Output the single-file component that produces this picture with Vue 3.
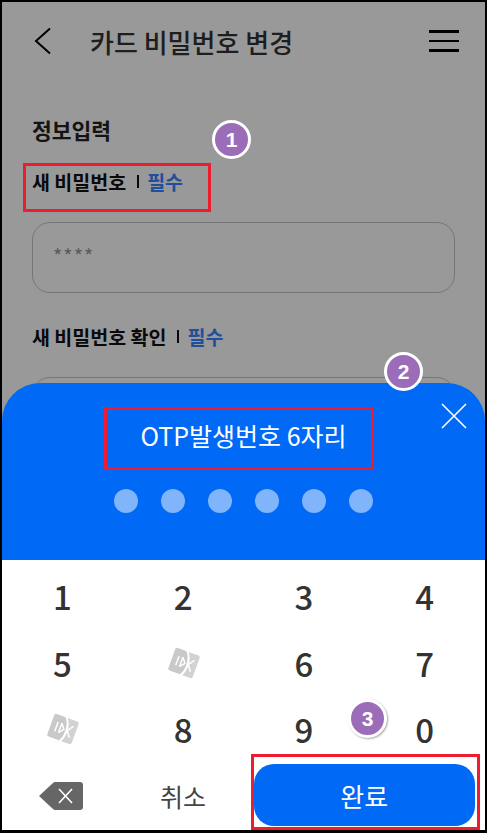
<template>
  <div class="phone">
    <div class="page">
      <header class="top-bar">
        <svg class="back" width="20" height="28" viewBox="0 0 20 28">
          <path d="M17 1.5 L3 14 L17 26.5" fill="none" stroke="#000" stroke-width="2" />
        </svg>
        <h1 class="title">카드 비밀번호 변경</h1>
        <div class="menu"><span></span><span></span><span></span></div>
      </header>

      <section class="form">
        <h2 class="form-title">정보입력</h2>
        <div class="field" v-for="field in fields" :key="field.label">
          <div class="label">
            <strong>{{ field.label }}</strong>
            <i class="divider"></i>
            <em>필수</em>
          </div>
          <div class="input">{{ field.value }}</div>
        </div>
      </section>
    </div>

    <div class="dim"></div>

    <div class="sheet">
      <div class="sheet-head">
        <p class="sheet-title">OTP발생번호 6자리</p>
        <svg class="close" width="26" height="26" viewBox="0 0 26 26">
          <path d="M1 1 L25 25 M25 1 L1 25" stroke="#fff" stroke-width="1.6" fill="none" />
        </svg>
        <div class="dots">
          <span v-for="n in 6" :key="n"></span>
        </div>
      </div>

      <div class="keypad">
        <div class="key" v-for="(k, i) in keys" :key="i">
          <svg v-if="k === 'logo'" class="logo" width="34" height="34" viewBox="0 0 34 34">
            <g transform="rotate(20 17 17)">
              <path d="M4 7 Q4 5 6 5 L15 5 C21 10 21 24 17 29 L6 29 Q4 29 4 27 Z" fill="#c9c9c9" />
              <path d="M17.5 5 L28 5 Q30 5 30 7 L30 27 Q30 29 28 29 L19.5 29 C23 23 23 11 17.5 5 Z" fill="#d2d2d2" />
              <path d="M10 12 V22 M14 12 V22 M14 12 L18 17 L14 22 M26 11 L21.5 17 L26 23" fill="none" stroke="#fff" stroke-width="1.5" />
            </g>
          </svg>
          <template v-else>{{ k }}</template>
        </div>

        <div class="key back-key">
          <svg width="44" height="28" viewBox="0 0 44 28">
            <path d="M0 14 L14 1 Q15 0 16 0 L41 0 Q44 0 44 3 L44 25 Q44 28 41 28 L16 28 Q15 28 14 27 Z" fill="#666" />
            <path d="M20 7 L33 21 M33 7 L20 21" stroke="#fff" stroke-width="1.6" fill="none" />
          </svg>
        </div>
        <div class="key cancel">취소</div>
        <button class="done">완료</button>
      </div>
    </div>

    <!-- 안내용 표시 -->
    <div class="mark mark-1"></div>
    <div class="mark mark-2"></div>
    <div class="mark mark-3"></div>
    <div class="badge badge-1">1</div>
    <div class="badge badge-2">2</div>
    <div class="badge badge-3">3</div>
  </div>
</template>

<script setup>
const fields = [
  { label: '새 비밀번호', value: '****' },
  { label: '새 비밀번호 확인', value: '' }
]

const keys = ['1', '2', '3', '4', '5', 'logo', '6', '7', 'logo', '8', '9', '0']
</script>

<style>
html,
body {
  margin: 0;
  background: #000;
}
</style>

<style scoped>
.phone {
  position: relative;
  width: 487px;
  height: 833px;
  box-sizing: border-box;
  border: 2px solid #000;
  border-bottom-width: 3px;
  overflow: hidden;
  background: #fff;
  font-family: "Noto Sans CJK KR", "Noto Sans", sans-serif;
}
.top-bar {
  display: flex;
  align-items: center;
  height: 78px;
  padding: 0 26px 0 31px;
}
.back {
  margin-right: 37px;
}
.title {
  flex: 1;
  margin: 0;
  font-size: 26px;
  font-weight: 500;
  color: #333;
}
.menu {
  display: flex;
  flex-direction: column;
  gap: 7px;
  width: 30px;
}
.menu span {
  height: 2.5px;
  background: #000;
}
.form {
  padding: 28px 30px 0;
}
.form-title {
  height: 22px;
  margin: 0 0 38px;
  font-size: 21.5px;
  line-height: 44px;
  font-weight: 700;
  color: #222;
}
.label {
  display: flex;
  align-items: center;
  height: 26px;
  font-size: 19.5px;
}
.label strong {
  font-weight: 700;
  color: #111;
}
.label em {
  font-style: normal;
  font-weight: 700;
  color: #3585ff;
}
.divider {
  width: 2px;
  height: 13px;
  margin: 0 8px 0 11px;
  background: #111;
}
.input {
  box-sizing: border-box;
  height: 71px;
  margin: 28px 0 30px;
  padding: 18px 20px;
  border: 1.5px solid #c4c4ce;
  border-radius: 18px;
  font-size: 20px;
  letter-spacing: 1px;
  color: #999;
}
.dim {
  position: absolute;
  inset: 0;
  background: rgba(0, 0, 0, 0.4);
}
.sheet {
  position: absolute;
  left: 0;
  right: 0;
  bottom: 0;
}
.sheet-head {
  position: relative;
  box-sizing: border-box;
  height: 177px;
  padding-top: 33px;
  border-radius: 38px 38px 0 0;
  background: #0069f5;
  text-align: center;
}
.sheet-title {
  margin: 0;
  font-size: 25px;
  line-height: 38px;
  font-weight: 400;
  color: #fff;
}
.close {
  position: absolute;
  top: 20px;
  right: 18px;
}
.dots {
  display: flex;
  justify-content: center;
  gap: 23px;
  margin-top: 35px;
  padding-right: 1px;
}
.dots span {
  width: 24px;
  height: 24px;
  border-radius: 50%;
  background: #80b4fb;
}
.keypad {
  display: grid;
  grid-template-columns: repeat(4, 1fr);
  grid-auto-rows: 66.5px;
  height: 270px;
  box-sizing: border-box;
  padding-top: 3px;
  background: #fff;
}
.key {
  display: flex;
  align-items: center;
  justify-content: center;
  font-size: 33px;
  font-weight: 500;
  color: #333;
}
.logo {
  margin-left: 2px;
}
.back-key {
  padding-right: 3px;
}
.cancel {
  font-size: 25px;
  font-weight: 400;
  color: #444;
}
.done {
  grid-column: span 2;
  align-self: end;
  height: 62px;
  margin: 0 10px 3px 10px;
  border: 0;
  border-radius: 20px;
  background: #0069f5;
  font-family: inherit;
  font-size: 26px;
  color: #fff;
}
.mark {
  position: absolute;
  box-sizing: border-box;
  border: 3px solid #ed1c2e;
}
.mark-1 {
  left: 21px;
  top: 161px;
  width: 188px;
  height: 49px;
}
.mark-2 {
  left: 102px;
  top: 405px;
  width: 270px;
  height: 63px;
}
.mark-3 {
  left: 249px;
  top: 752px;
  width: 229px;
  height: 76px;
}
.badge {
  position: absolute;
  box-sizing: border-box;
  display: flex;
  align-items: center;
  justify-content: center;
  width: 39px;
  height: 39px;
  border: 3px solid #fff;
  border-radius: 50%;
  background: #9b6cb8;
  font-family: "Liberation Sans", Arial, sans-serif;
  font-size: 21px;
  font-weight: 700;
  color: #fff;
}
.badge-1 {
  left: 210px;
  top: 118px;
}
.badge-2 {
  left: 382px;
  top: 350px;
}
.badge-3 {
  left: 346px;
  top: 697px;
  box-shadow: 1px 1px 2px #aaa;
}
</style>
